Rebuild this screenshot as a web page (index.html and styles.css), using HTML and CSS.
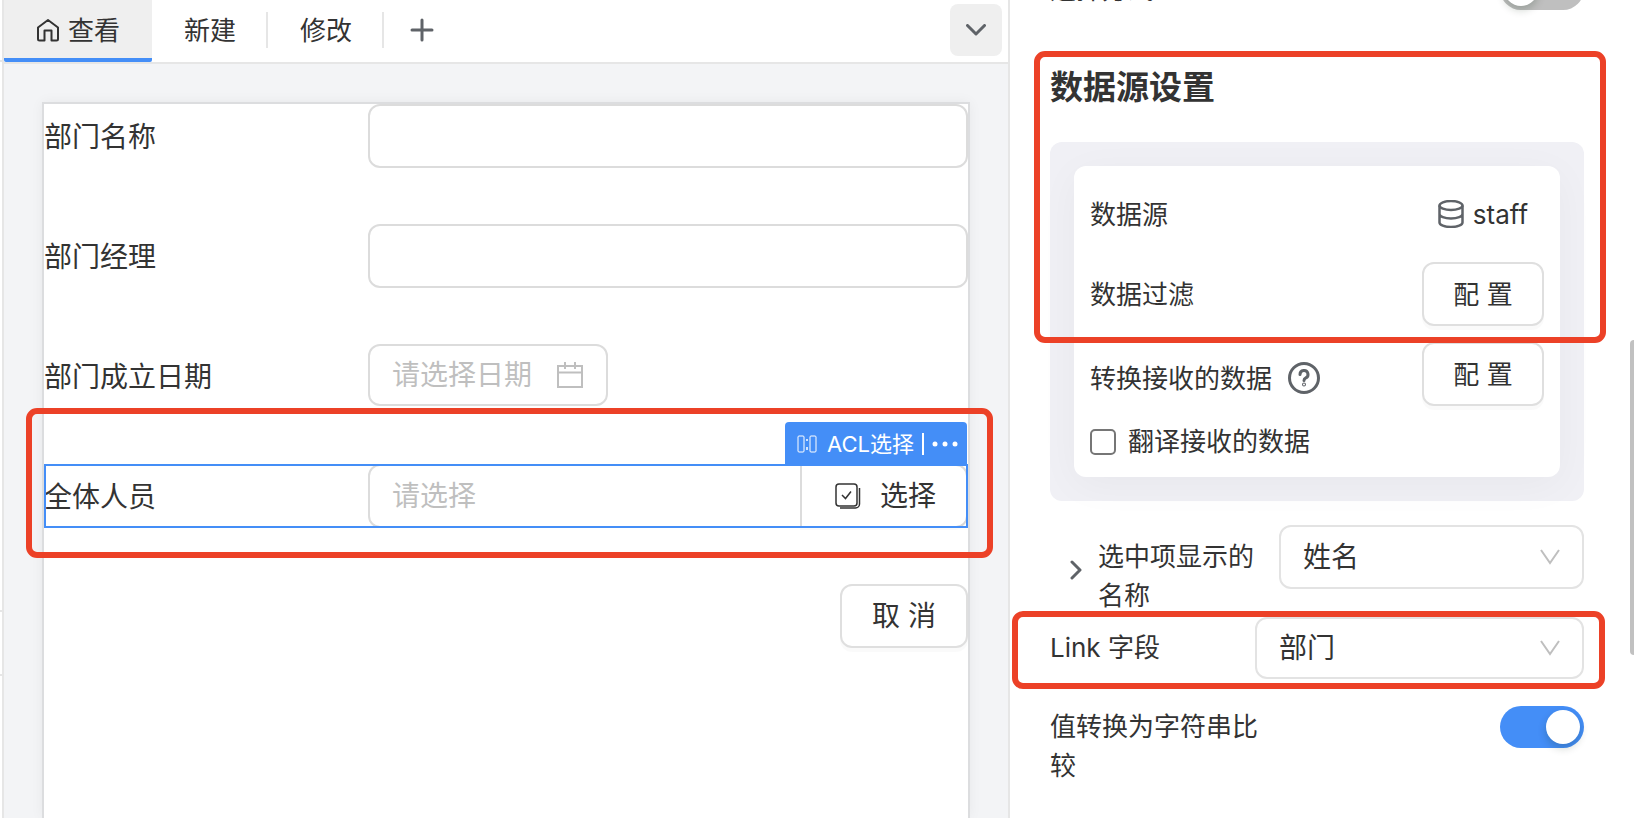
FILE: index.html
```html
<!DOCTYPE html>
<html lang="zh-CN">

<head>
    <meta charset="UTF-8">
    <meta name="viewport" content="width=device-width, initial-scale=1.0">
    <title>部门表单</title>
    <link rel="stylesheet" href="styles.css">
</head>

<body>
    <div class="app">
        <div class="rail">
            <div class="rail-top"></div>
            <div class="rail-item"></div>
        </div>

        <!-- Form designer -->
        <main class="designer">
            <nav class="tabs">
                <button class="tab active" type="button">
                    <svg class="home-icon" viewBox="0 0 24 24" fill="none" stroke="currentColor" stroke-width="2" stroke-linejoin="round">
                        <path d="M2 9.500 12 2l10 7.500V21a1.500 1.500 0 0 1-1.500 1.500H15.500v-10H8.500v10h-5A1.500 1.500 0 0 1 2 21z" />
                    </svg>
                    查看
                </button>
                <button class="tab" type="button">新建</button>
                <button class="tab" type="button">修改</button>
                <button class="tab-add" type="button" aria-label="添加">
                    <svg viewBox="0 0 24 24" fill="none" stroke="currentColor" stroke-width="3" stroke-linecap="round">
                        <path d="M12 2v20M2 12h20" />
                    </svg>
                </button>
                <button class="tab-more" type="button" aria-label="更多">
                    <svg viewBox="0 0 20 12" fill="none" stroke="currentColor" stroke-width="3" stroke-linecap="round" stroke-linejoin="round">
                        <path d="m1.500 1.500 8.500 8.500 8.500-8.500" />
                    </svg>
                </button>
            </nav>

            <div class="canvas">
                <form class="form">
                    <div class="field">
                        <label for="deptName">部门名称</label>
                        <input class="text-input" type="text" id="deptName">
                    </div>
                    <div class="field">
                        <label for="deptManager">部门经理</label>
                        <input class="text-input" type="text" id="deptManager">
                    </div>
                    <div class="field">
                        <label for="deptDate">部门成立日期</label>
                        <div class="date-input">
                            <input type="text" id="deptDate" placeholder="请选择日期">
                            <svg viewBox="0 0 26 26" fill="none" stroke="currentColor" stroke-width="2">
                                <path d="M1 4h24v21H1zM1 10.500h24M8 0v7M18 0v7" />
                            </svg>
                        </div>
                    </div>
                    <div class="field selected">
                        <label for="staffPicker">全体人员</label>
                        <div class="picker">
                            <input type="text" id="staffPicker" placeholder="请选择">
                            <button type="button">
                                <svg viewBox="0 0 26 26" fill="none" stroke="currentColor" stroke-width="1.500">
                                    <rect x="1" y="1" width="21" height="22" rx="3" />
                                    <path d="m7 12 3.500 3.500L16 8.500" />
                                    <path d="M24.500 5v16a4 4 0 0 1-4 4H5" />
                                </svg>
                                选择
                            </button>
                        </div>
                        <div class="node-tag">
                            <svg class="node-icon" viewBox="0 0 20 18" fill="none" stroke="currentColor">
                                <rect x="1" y="1" width="6" height="16" rx="1" />
                                <rect x="13" y="1" width="6" height="16" rx="1" />
                                <path d="M10 4v2M10 12v3" stroke-width="1.500" />
                            </svg>
                            <span>ACL选择</span>
                            <span class="node-line"></span>
                            <svg class="node-dots" viewBox="0 0 26 6" fill="currentColor">
                                <circle cx="3" cy="3" r="2.500" />
                                <circle cx="13" cy="3" r="2.500" />
                                <circle cx="23" cy="3" r="2.500" />
                            </svg>
                        </div>
                        <div class="mark mark-field"></div>
                    </div>
                    <div class="actions">
                        <button class="btn" type="button">取 消</button>
                    </div>
                </form>
            </div>
        </main>

        <!-- Property panel -->
        <aside class="panel">
            <div class="panel-body">
                <div class="prop prop-first">
                    <label for="modeSwitch">选择方式</label>
                    <input class="switch" type="checkbox" id="modeSwitch">
                </div>

                <section class="source">
                    <div class="mark mark-source"></div>
                    <h2>数据源设置</h2>
                    <div class="source-box">
                        <div class="source-card">
                            <div class="source-row">
                                <span>数据源</span>
                                <span class="source-name">
                                    <svg viewBox="0 0 26 28" fill="none" stroke="currentColor" stroke-width="2.500">
                                        <ellipse cx="13" cy="5.500" rx="11.500" ry="4.500" />
                                        <path d="M1.500 5.500v17c0 2.500 5 4.500 11.500 4.500s11.500-2 11.500-4.500v-17M1.500 14c0 2.500 5 4.500 11.500 4.500s11.500-2 11.500-4.500" />
                                    </svg>
                                    staff
                                </span>
                            </div>
                            <div class="source-row">
                                <span>数据过滤</span>
                                <button class="btn btn-config" type="button">配 置</button>
                            </div>
                            <div class="source-row">
                                <span class="with-help">转换接收的数据
                                    <svg viewBox="0 0 32 32" fill="none" stroke="currentColor" stroke-width="3" stroke-linecap="round">
                                        <circle cx="16" cy="16" r="14.500" />
                                        <path d="M12 12.500a4 4 0 1 1 5.500 3.700c-1 .5-1.500 1-1.500 2.300" />
                                        <circle cx="16" cy="22.500" r=".5" />
                                    </svg>
                                </span>
                                <button class="btn btn-config" type="button">配 置</button>
                            </div>
                            <label class="check">
                                <input type="checkbox">
                                翻译接收的数据
                            </label>
                        </div>
                    </div>
                </section>

                <div class="prop prop-display">
                    <button class="expand" type="button" aria-label="展开">
                        <svg viewBox="0 0 12 20" fill="none" stroke="currentColor" stroke-width="3" stroke-linecap="round" stroke-linejoin="round">
                            <path d="m2 2 8 8-8 8" />
                        </svg>
                    </button>
                    <label for="displayName">选中项显示的名称</label>
                    <div class="select">
                        <select id="displayName">
                            <option>姓名</option>
                        </select>
                        <svg viewBox="0 0 20 16" fill="none" stroke="currentColor" stroke-width="2">
                            <path d="m1 1 9 13 9-13" />
                        </svg>
                    </div>
                </div>

                <div class="prop prop-link">
                    <div class="mark mark-link"></div>
                    <label for="linkField">Link 字段</label>
                    <div class="select">
                        <select id="linkField">
                            <option>部门</option>
                        </select>
                        <svg viewBox="0 0 20 16" fill="none" stroke="currentColor" stroke-width="2">
                            <path d="m1 1 9 13 9-13" />
                        </svg>
                    </div>
                </div>

                <div class="prop prop-string">
                    <label for="stringSwitch">值转换为字符串比较</label>
                    <input class="switch" type="checkbox" id="stringSwitch" checked>
                </div>
            </div>
            <div class="scrollbar"></div>
        </aside>
    </div>
</body>

</html>
```
FILE: styles.css
```css
* {
    box-sizing: border-box;
}

body {
    margin: 0;
    font-family: Inter, "Noto Sans CJK SC", sans-serif;
    font-size: 26px;
    line-height: 39px;
    color: #333;
    background-color: #fff;
}

button,
input,
select {
    font: inherit;
    color: inherit;
    margin: 0;
}

button {
    padding: 0;
    border: none;
    background: none;
    cursor: pointer;
}

svg {
    display: block;
    flex: none;
}

.app {
    display: flex;
    height: 100vh;
    overflow: hidden;
}

/* Left rail */

.rail {
    display: flex;
    flex-direction: column;
    width: 4px;
    border-right: 2px solid #e6e6e6;
}

.rail-top {
    height: 62px;
    border-bottom: 2px solid #e6e6e6;
}

.rail-item {
    height: 66px;
    margin-top: 548px;
    border: solid #e6e6e6;
    border-width: 2px 0;
}

/* Designer */

.designer {
    flex: 1;
    display: flex;
    flex-direction: column;
    min-width: 0;
}

.tabs {
    display: flex;
    align-items: center;
    height: 64px;
    flex: none;
    padding-right: 6px;
    border-bottom: 2px solid #e6e6e6;
}

.tab {
    position: relative;
    display: flex;
    align-items: center;
    justify-content: center;
    gap: 8px;
    height: 62px;
    padding: 0 32px 2px;
}

.tab.active {
    background-color: #efefef;
    border-bottom: 4px solid #448ef7;
    border-radius: 0 0 2px 2px;
    padding-top: 2px;
    padding-bottom: 0;
}

.tab:not(.active)::after {
    content: "";
    position: absolute;
    right: 0;
    top: 12px;
    width: 2px;
    height: 36px;
    background-color: #e6e6e6;
}

.home-icon {
    width: 24px;
    height: 24px;
}

.tab-add {
    padding: 0 26px 2px;
    color: #5f6368;
}

.tab-add svg {
    width: 24px;
    height: 24px;
}

.tab-more {
    display: flex;
    align-items: center;
    justify-content: center;
    width: 52px;
    height: 52px;
    margin-left: auto;
    margin-bottom: 2px;
    border-radius: 8px;
    background-color: #efefef;
    color: #5f6368;
}

.tab-more svg {
    width: 20px;
    height: 12px;
}

.canvas {
    flex: 1;
    display: flex;
    padding: 38px 38px 0;
    background-color: #f3f4f6;
}

.form {
    flex: 1;
    display: flex;
    flex-direction: column;
    gap: 56px;
    min-width: 0;
    font-size: 28px;
    border: 2px solid #dcdddf;
    border-bottom: none;
    background-color: #fff;
    box-shadow: 0 0 12px rgba(0, 0, 0, 0.05);
}

.field {
    position: relative;
    display: flex;
    align-items: center;
    height: 64px;
}

.field > label {
    width: 324px;
    flex: none;
    padding-top: 2px;
}

.text-input,
.date-input,
.picker {
    border: 2px solid #dcdcdc;
    border-radius: 12px;
    background-color: #fff;
}

.text-input {
    flex: 1;
    min-width: 0;
    height: 64px;
    padding: 0 22px;
}

.date-input {
    display: flex;
    align-items: center;
    width: 240px;
    height: 62px;
    margin-bottom: 2px;
    padding: 0 23px 0 22px;
    color: #bfbfbf;
}

.date-input input {
    flex: 1;
    min-width: 0;
    padding: 0;
    border: none;
    background: none;
    outline: none;
}

.date-input svg {
    width: 26px;
    height: 26px;
}

::placeholder {
    color: #bfbfbf;
    opacity: 1;
}

/* Selected component */

.selected::after {
    content: "";
    position: absolute;
    inset: 0;
    border: 2px solid #448ef7;
    pointer-events: none;
}

.picker {
    flex: 1;
    display: flex;
    min-width: 0;
    height: 64px;
}

.picker input {
    flex: 1;
    min-width: 0;
    padding: 0 22px;
    border: none;
    background: none;
    outline: none;
}

.picker button {
    display: flex;
    flex: none;
    align-items: center;
    gap: 19px;
    width: 166px;
    padding-left: 33px;
    border-left: 2px solid #dcdcdc;
    border-radius: 0 10px 10px 0;
    box-shadow: 0 4px 0 rgba(0, 0, 0, 0.02);
}

.picker svg {
    width: 26px;
    height: 26px;
}

.node-tag {
    position: absolute;
    right: 1px;
    bottom: 62px;
    display: flex;
    align-items: center;
    height: 44px;
    padding: 0 9px 0 12px;
    border-radius: 4px 4px 0 0;
    background-color: #448ef7;
    color: #fff;
    font-size: 22px;
}

.node-icon {
    width: 20px;
    height: 18px;
    margin-right: 10px;
}

.node-line {
    width: 2px;
    height: 22px;
    margin: 0 8px;
    background-color: #fff;
}

.node-dots {
    width: 26px;
    height: 6px;
}

.actions {
    display: flex;
    justify-content: flex-end;
}

.btn {
    width: 128px;
    height: 64px;
    border: 2px solid #dfdfdf;
    border-radius: 12px;
    background-color: #fff;
    box-shadow: 0 4px 0 rgba(0, 0, 0, 0.02);
}

.btn-config {
    width: 122px;
}

/* Red highlight frames */

.mark {
    position: absolute;
    z-index: 2;
    border: 6px solid #ec4127;
    border-radius: 11px;
    pointer-events: none;
}

.mark-field {
    inset: -56px -25px -30px -18px;
}

.mark-source {
    inset: -7px -22px 158px -16px;
}

.mark-link {
    inset: -6px -21px -10px -38px;
}

/* Property panel */

.panel {
    position: relative;
    width: 626px;
    flex: none;
    border-left: 2px solid #e6e6e6;
    background-color: #fff;
    overflow: hidden;
}

/* the panel is scrolled, so its first row is cut by the top edge */
.panel-body {
    display: flex;
    flex-direction: column;
    margin-top: -32px;
    padding: 0 50px 0 40px;
}

.prop {
    position: relative;
    display: flex;
    justify-content: space-between;
    align-items: flex-start;
}

.prop-first {
    height: 42px;
}

.prop-first label {
    padding-top: 2px;
}

.source {
    position: relative;
    margin-top: 48px;
}

.source h2 {
    margin: 0;
    padding: 6px 0 32px;
    font-size: 33px;
    line-height: 46px;
    font-weight: 600;
}

.source-box {
    padding: 24px;
    border-radius: 12px;
    background-color: #f0f0f5;
}

.source-card {
    padding: 8px 16px;
    border-radius: 12px;
    background-color: #fff;
    box-shadow: 0 8px 40px rgba(0, 0, 0, 0.04);
}

.source-row {
    display: flex;
    align-items: center;
    justify-content: space-between;
    height: 80px;
}

.source-name {
    display: flex;
    align-items: center;
    gap: 9px;
    padding-right: 16px;
}

.source-name svg {
    width: 26px;
    height: 28px;
    color: #5f6368;
}

.with-help {
    display: flex;
    align-items: center;
    gap: 16px;
    padding-top: 8px;
}

.with-help svg {
    width: 32px;
    height: 32px;
    color: #5f6368;
}

.check {
    display: flex;
    align-items: center;
    gap: 12px;
    height: 55px;
}

.check input {
    appearance: none;
    width: 26px;
    height: 26px;
    border: 2px solid #767676;
    border-radius: 5px;
    background-color: #fff;
}

.prop-display {
    height: 92px;
    margin-top: 24px;
}

.expand {
    padding: 35px 16px 0 20px;
    color: #5f6368;
}

.expand svg {
    width: 12px;
    height: 20px;
}

.prop-display label {
    width: 157px;
    margin-top: 12px;
    margin-right: auto;
}

.prop-display .select {
    width: 305px;
}

.prop-link label {
    padding-top: 11px;
}

.prop-link .select {
    width: 329px;
}

.select {
    display: grid;
    align-items: center;
    font-size: 28px;
}

.select select,
.select svg {
    grid-area: 1 / 1;
}

.select select {
    appearance: none;
    width: 100%;
    height: 64px;
    padding: 0 48px 0 22px;
    border: 2px solid #e3e3e3;
    border-radius: 12px;
    background-color: #fff;
}

.prop-link select {
    height: 62px;
}

.select svg {
    width: 20px;
    height: 16px;
    margin-right: 24px;
    justify-self: end;
    color: #bfbfbf;
    pointer-events: none;
}

.prop-string {
    margin-top: 27px;
}

.prop-string label {
    width: 210px;
    padding-top: 1px;
}

.switch {
    appearance: none;
    display: flex;
    width: 84px;
    height: 42px;
    padding: 4px;
    border-radius: 21px;
    background-color: #bfbfbf;
    cursor: pointer;
}

.switch::before {
    content: "";
    width: 34px;
    height: 34px;
    border-radius: 50%;
    background-color: #fff;
    box-shadow: 0 4px 8px rgba(0, 35, 11, 0.2);
}

.switch:checked {
    justify-content: flex-end;
    background-color: #448ef7;
}

.scrollbar {
    position: absolute;
    right: 0;
    top: 340px;
    width: 4px;
    height: 315px;
    border-radius: 4px 0 0 4px;
    background-color: #c1c1c1;
}
```
